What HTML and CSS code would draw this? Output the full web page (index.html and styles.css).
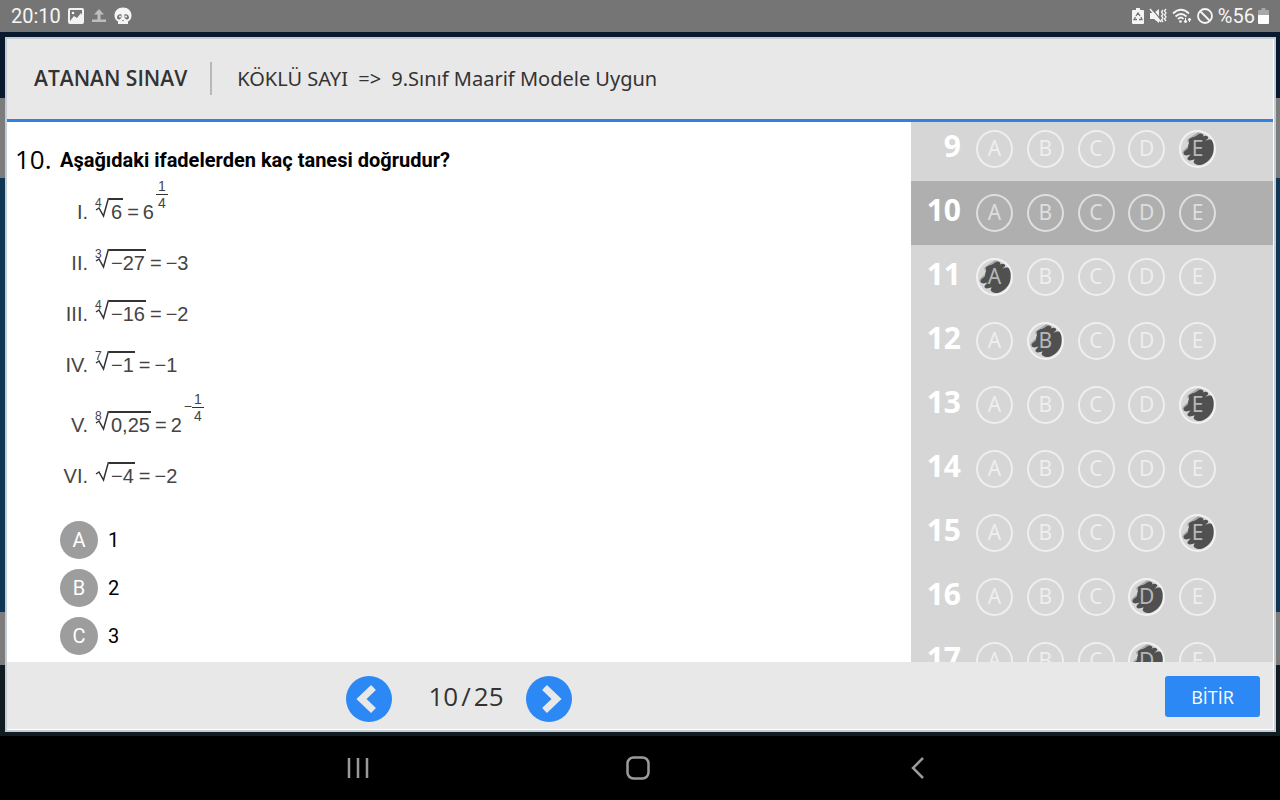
FILE: index.html
```html
<!DOCTYPE html>
<html lang="tr">
<head>
  <meta charset="UTF-8">
  <meta name="viewport" content="width=device-width, initial-scale=1">
  <title>Atanan Sınav</title>
  <link rel="stylesheet" href="styles.css">
</head>
<body>
  <div class="status-bar">
    <div class="status-group">
      <span class="clock">20:10</span>
      <svg width="16" height="16" viewBox="0 0 16 16"><rect x="1" y="1" width="14" height="14" rx="1" fill="none" stroke="#f2f2f2" stroke-width="2"/><path d="M2 13l4-5 3 2 4-5 1 2v7H2z" fill="#f2f2f2"/><circle cx="5" cy="5" r="1.3" fill="#f2f2f2"/></svg>
      <svg width="16" height="16" viewBox="0 0 16 16"><path d="M8 1l5 5.500H9.500v5h-3v-5H3zM1 11.500h14V14H1z" fill="#bdbdbd"/></svg>
      <svg width="18" height="18" viewBox="0 0 18 18"><path d="M9 0.500c5 0 8.500 3.500 8.500 8 0 3-1.500 5-3.500 6v2.500H4V14.500C2 13.500.5 11.500.5 8.500.5 4 4 .5 9 .5z" fill="#f5f5f5"/><path d="M3 10.500c0-2.500 2-4 4.500-3 .5 2.500-.5 5-2.500 5-1 0-2-1-2-2zM15 10.500c0-2.500-2-4-4.500-3-.5 2.500.5 5 2.500 5 1 0 2-1 2-2z" fill="#757575"/><circle cx="6" cy="9.500" r="1" fill="#f5f5f5"/><circle cx="12" cy="9.500" r="1" fill="#f5f5f5"/><path d="M8 13h2l-1 1.500z" fill="#757575"/></svg>
    </div>
    <div class="status-group status-right">
      <svg width="12" height="16" viewBox="0 0 12 16"><path d="M4 0h4v2h3q1 0 1 1v12q0 1-1 1H1q-1 0-1-1V3q0-1 1-1h3z" fill="#f5f5f5"/><path d="M4 8l2-3 2 3M9 9l1 2.500H7M5 11.500H2L3.500 9" fill="none" stroke="#757575" stroke-width="1.300"/></svg>
      <svg width="18" height="16" viewBox="0 0 18 16"><path d="M1 5h4l5-4v14l-5-4H1z" fill="#f5f5f5"/><path d="M2 0l11 13" stroke="#757575" stroke-width="1.200"/><path d="M1 1l11 13" stroke="#f5f5f5" stroke-width="1.500"/><path d="M14 2l-1.500 2 1.500 2-1.500 2 1.500 2-1.500 2 1.500 2M17 1l-1.500 2L17 5l-1.500 2L17 9l-1.500 2 1.500 2" fill="none" stroke="#f5f5f5" stroke-width="1.300"/></svg>
      <svg width="20" height="16" viewBox="0 0 20 16"><path d="M1 5.500Q9-2 17 5.500M3.500 8.500q5.500-5 11 0M6 11q3-3 5.500 0" fill="none" stroke="#f5f5f5" stroke-width="1.800"/><circle cx="8.500" cy="13.500" r="1.300" fill="#f5f5f5"/><path d="M13.500 10v4M12 13l1.500 2 1.500-2zM17.500 14v-4M16 12l1.500-2 1.500 2z" stroke="#f5f5f5" stroke-width="1" fill="#f5f5f5"/></svg>
      <svg width="16" height="16" viewBox="0 0 16 16"><circle cx="8" cy="8" r="7" fill="none" stroke="#f5f5f5" stroke-width="1.800"/><path d="M3 3l10 10" stroke="#f5f5f5" stroke-width="1.800"/></svg>
      <span class="battery-text">%56</span>
      <svg width="11" height="16" viewBox="0 0 11 16"><path d="M3.500 0h4v2H10q1 0 1 1v4H0V3q0-1 1-1h2.500z" fill="#a8a8a8"/><path d="M0 7h11v8q0 1-1 1H1q-1 0-1-1z" fill="#fff"/></svg>
    </div>
  </div>

  <main class="stage">
    <div class="exam">
      <header class="exam-header">
        <h1>ATANAN SINAV</h1>
        <p class="exam-name">KÖKLÜ SAYI <span class="arrow">=&gt;</span> 9.Sınıf Maarif Modele Uygun</p>
      </header>

      <div class="exam-body">
        <section class="question">
          <div class="question-number">10.</div>
          <div class="question-content">
            <h2>Aşağıdaki ifadelerden kaç tanesi doğrudur?</h2>
            <ol class="statements">
              <li><span class="roman">I.</span><span class="formula"><span class="index">4</span><svg class="radical" viewBox="0 0 14 22"><path d="M1 13l3-2 4.500 8L13.500 1"/></svg><span class="radicand">6</span><span class="equals">=</span>6<span class="power"><span class="fraction"><span>1</span><span>4</span></span></span></span></li>
              <li><span class="roman">II.</span><span class="formula"><span class="index">3</span><svg class="radical" viewBox="0 0 14 22"><path d="M1 13l3-2 4.500 8L13.500 1"/></svg><span class="radicand">−27</span><span class="equals">=</span>−3</span></li>
              <li><span class="roman">III.</span><span class="formula"><span class="index">4</span><svg class="radical" viewBox="0 0 14 22"><path d="M1 13l3-2 4.500 8L13.500 1"/></svg><span class="radicand">−16</span><span class="equals">=</span>−2</span></li>
              <li><span class="roman">IV.</span><span class="formula"><span class="index">7</span><svg class="radical" viewBox="0 0 14 22"><path d="M1 13l3-2 4.500 8L13.500 1"/></svg><span class="radicand">−1</span><span class="equals">=</span>−1</span></li>
              <li><span class="roman">V.</span><span class="formula"><span class="index">8</span><svg class="radical" viewBox="0 0 14 22"><path d="M1 13l3-2 4.500 8L13.500 1"/></svg><span class="radicand">0,25</span><span class="equals">=</span>2<span class="power"><span class="minus">−</span><span class="fraction"><span>1</span><span>4</span></span></span></span></li>
              <li><span class="roman">VI.</span><span class="formula"><svg class="radical" viewBox="0 0 14 22"><path d="M1 13l3-2 4.500 8L13.500 1"/></svg><span class="radicand">−4</span><span class="equals">=</span>−2</span></li>
            </ol>
            <div class="options">
              <button type="button" class="option"><span class="option-letter">A</span>1</button>
              <button type="button" class="option"><span class="option-letter">B</span>2</button>
              <button type="button" class="option"><span class="option-letter">C</span>3</button>
            </div>
          </div>
        </section>

        <aside class="sheet">
          <form class="sheet-rows" id="sheetRows"></form>
        </aside>
      </div>

      <footer class="exam-footer">
        <div class="pager">
          <button type="button" class="page-btn" aria-label="Önceki soru">
            <svg width="46" height="46" viewBox="0 0 46 46"><path d="M27.500 11.500L15.500 23l12 11.500"/></svg>
          </button>
          <span class="page-count"><span>10</span><span>/</span><span>25</span></span>
          <button type="button" class="page-btn" aria-label="Sonraki soru">
            <svg width="46" height="46" viewBox="0 0 46 46"><path d="M18.500 11.500l12 11.500-12 11.500"/></svg>
          </button>
        </div>
        <div class="finish">
          <button type="button" class="finish-btn">BİTİR</button>
        </div>
      </footer>
    </div>
  </main>

  <nav class="nav-bar">
    <button type="button" aria-label="Son uygulamalar"><svg width="24" height="24" viewBox="0 0 24 24"><path d="M3 2v20M12 2v20M21 2v20"/></svg></button>
    <button type="button" aria-label="Ana ekran"><svg width="24" height="24" viewBox="0 0 24 24"><rect x="1.500" y="1.500" width="21" height="21" rx="6"/></svg></button>
    <button type="button" aria-label="Geri"><svg width="24" height="24" viewBox="0 0 24 24"><path d="M17 2L7 12l10 10"/></svg></button>
  </nav>

  <script>
    const sheetRows = document.getElementById('sheetRows');
    const choices = ['A', 'B', 'C', 'D', 'E'];
    const current = 10;
    const answers = { 9: 'E', 11: 'A', 12: 'B', 13: 'E', 15: 'E', 16: 'D', 17: 'D' };

    // pencil mark, only visible when the bubble is checked
    const scribble = `
      <svg class="scribble" viewBox="0 0 38 38">
        <path d="M11 11L20 5M6 23l8-8M11 29l7-6" stroke="#aaa" stroke-width="5" stroke-linecap="round"/>
        <path d="M10 10c3-3 5-2 8-4 2-2 4-3 6-2s1 2 0 3c3-2 6-1 6 1 0 1-2 2-3 3 3-1 6-2 7 0 2 3 2 8 1 13-2 6-7 11-13 12-3 0-6-1-7-3 0-1 1-2 1-3-3 1-6 2-7 0-1-1 2-3 3-5-2 1-6 2-7 0-1-3 2-4 4-6 1-2 0-3 1-5 1-1 0-3 0-4z" fill="#505050"/>
      </svg>`;

    function renderSheet() {
      let html = '';
      for (let no = 9; no <= 17; no++) {
        const bubbles = choices.map(letter => `
          <label class="bubble">
            <input type="radio" name="q${no}" value="${letter}" ${answers[no] === letter ? 'checked' : ''}>
            ${scribble}
            <span>${letter}</span>
          </label>`).join('');
        html += `
          <div class="sheet-row ${no === current ? 'current' : ''}">
            <span class="row-no">${no}</span>
            <div class="bubbles">${bubbles}</div>
          </div>`;
      }
      sheetRows.innerHTML = html;
    }

    renderSheet();
  </script>
</body>
</html>
```
FILE: styles.css
```css
* {
  box-sizing: border-box;
}
body {
  margin: 0;
  height: 100vh;
  display: flex;
  flex-direction: column;
  font-family: "Open Sans", "Noto Sans", sans-serif;
  background: #000;
  color: #333;
  overflow: hidden;
}
h1, h2, p, ol {
  margin: 0;
  padding: 0;
}
button {
  border: none;
  padding: 0;
  background: none;
  font-family: inherit;
  cursor: pointer;
}
svg {
  display: block;
}

/* android status bar */
.status-bar {
  height: 32px;
  flex: none;
  display: flex;
  justify-content: space-between;
  align-items: center;
  padding: 0 11px;
  background: #757575;
  color: #f5f5f5;
  font-family: Roboto, sans-serif;
  font-size: 20px;
}
.status-group {
  display: flex;
  align-items: center;
  gap: 7px;
}
.status-right {
  gap: 5px;
}
.status-right .battery-text {
  margin-right: -2px;
}

/* page behind the exam window */
.stage {
  flex: 1;
  min-height: 0;
  padding: 5px 4px 4px 5px;
  background: linear-gradient(#0a1a2e 66px, #7c7c7c 66px, #7c7c7c 146px, #0f3654 146px, #0f3654 580px, #7c7c7c 580px, #7c7c7c 633px, #101c22 633px);
}
.exam {
  height: 100%;
  display: flex;
  flex-direction: column;
  border: 2px solid #c4ccd6;
  box-shadow: inset -1px -1px 0 #fff;
  background: #e8e8e8;
  padding: 0 1px 1px 0;
}
.exam-header {
  height: 83px;
  flex: none;
  display: flex;
  align-items: center;
  padding: 0 27px 2px;
  border-bottom: 3px solid #3481dd;
}
.exam-header h1 {
  font-size: 21px;
  font-weight: 600;
  padding-right: 23px;
}
.exam-name {
  font-family: "Noto Sans", sans-serif;
  font-size: 20px;
  line-height: 33px;
  padding-left: 25px;
  border-left: 2px solid #b8b8b8;
}
.arrow {
  margin: 0 5px;
}

.exam-body {
  flex: 1;
  min-height: 0;
  display: flex;
}
.question {
  flex: 1;
  display: flex;
  padding: 20px 8px 0;
  background: #fff;
  color: #000;
  font-family: Roboto, sans-serif;
  overflow: hidden;
}
.question-number {
  width: 45px;
  flex: none;
  font-family: "Open Sans", sans-serif;
  font-size: 26px;
  line-height: 34px;
}
.question h2 {
  font-size: 20px;
  font-weight: 700;
  line-height: 36px;
}

/* formulas */
.statements {
  list-style: none;
  color: #444;
  font-family: "Liberation Sans", Arial, sans-serif;
  font-size: 20px;
}
.statements li {
  display: flex;
  align-items: baseline;
  gap: 7px;
  line-height: 51px;
}
.roman {
  width: 28px;
  text-align: right;
}
.formula {
  white-space: nowrap;
}
.index {
  display: inline-block;
  width: 8px;
  margin-right: -8px;
  font-size: 12px;
  line-height: 12px;
  vertical-align: 12px;
}
.radical {
  display: inline-block;
  width: 14px;
  height: 22px;
  vertical-align: 0;
  fill: none;
  stroke: #333;
  stroke-width: 1.5;
}
.radicand {
  display: inline-block;
  line-height: 24px;
  border-top: 2px solid #333;
  padding: 0 1px 0 2px;
}
.equals {
  margin: 0 4px;
}
.power {
  display: inline-block;
  margin-left: 2px;
  font-size: 14px;
  line-height: 16px;
  vertical-align: 28px;
}
.minus {
  vertical-align: -7px;
}
.fraction {
  display: inline-flex;
  flex-direction: column;
  width: 12px;
  text-align: center;
}
.fraction span:first-child {
  border-bottom: 1px solid #333;
}

.options {
  display: flex;
  flex-direction: column;
  align-items: flex-start;
  gap: 10px;
  padding-top: 19px;
}
.option {
  display: flex;
  align-items: center;
  gap: 10px;
  font-size: 20px;
  color: #000;
}
.option-letter {
  width: 38px;
  height: 38px;
  line-height: 38px;
  border-radius: 50%;
  background: #9d9d9d;
  color: #fff;
}

/* answer sheet */
.sheet {
  width: 362px;
  flex: none;
  background: #d6d6d6;
  overflow: hidden;
}
.sheet-rows {
  margin-top: -5px;
}
.sheet-row {
  height: 64px;
  display: flex;
  align-items: center;
  gap: 15px;
  padding-left: 10px;
}
.sheet-row.current {
  background: #afafaf;
}
.row-no {
  width: 40px;
  padding-bottom: 6px;
  text-align: right;
  font-size: 30px;
  font-weight: 700;
  line-height: 40px;
  color: #fff;
}
.bubbles {
  width: 240px;
  display: flex;
  justify-content: space-between;
}
.bubble {
  display: grid;
  width: 37px;
  height: 38px;
  cursor: pointer;
}
.bubble > * {
  grid-area: 1 / 1;
}
.bubble input {
  appearance: none;
  margin: 0;
  border: 2px solid rgba(255, 255, 255, 0.6);
  border-radius: 50%;
}
.bubble input:checked {
  border-color: #f2f2f2;
}
.bubble span {
  z-index: 1;
  text-align: center;
  font-family: "Noto Sans", sans-serif;
  font-size: 21px;
  line-height: 36px;
  color: rgba(255, 255, 255, 0.6);
}
.scribble {
  display: none;
  fill: none;
}
.bubble input:checked + .scribble {
  display: block;
}

.exam-footer {
  height: 67px;
  flex: none;
  display: flex;
}
.pager {
  flex: 1;
  display: flex;
  justify-content: center;
  align-items: center;
  padding-top: 7px;
}
.page-btn {
  width: 46px;
  height: 46px;
  border-radius: 50%;
  background: #2b88f4;
}
.page-btn path {
  fill: none;
  stroke: #e8e8e8;
  stroke-width: 7;
}
.page-count {
  width: 134px;
  display: flex;
  justify-content: center;
  gap: 3px;
  padding: 0 0 7px 14px;
  font-size: 26px;
}
.finish {
  width: 362px;
  display: flex;
  justify-content: flex-end;
  align-items: flex-start;
  padding: 14px 13px 0 0;
}
.finish-btn {
  width: 95px;
  height: 41px;
  border-radius: 3px;
  background: #2b88f4;
  color: #fff;
  font-size: 18px;
}

/* android navigation */
.nav-bar {
  height: 64px;
  flex: none;
  display: flex;
  justify-content: center;
  padding-right: 4px;
}
.nav-bar button {
  width: 280px;
  display: flex;
  justify-content: center;
  align-items: center;
}
.nav-bar svg {
  fill: none;
  stroke: #9a9a9a;
  stroke-width: 2.5;
}
```
